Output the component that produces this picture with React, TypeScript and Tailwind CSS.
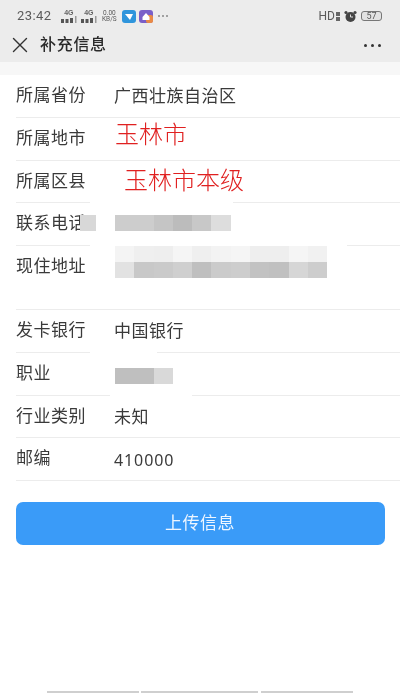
import { X } from "lucide-react";

const phoneBlocks = ["bg-[#cdcdcd]", "bg-[#cdcdcd]", "bg-[#c5c5c5]", "bg-[#bcbcbc]", "bg-[#c8c8c8]", "bg-[#dddddd]"];
const addrTop = ["bg-[#f4f4f4]", "bg-[#efefef]", "bg-[#eeeeee]", "bg-[#f5f5f5]", "bg-[#efefef]", "bg-[#f3f3f3]", "bg-[#f5f5f5]", "bg-[#eeeeee]", "bg-[#eeeeee]", "bg-[#f5f5f5]", "bg-[#f1f1f1]"];
const addrBottom = ["bg-[#e2e2e2]", "bg-[#c8c8c8]", "bg-[#cacaca]", "bg-[#cfcfcf]", "bg-[#bfbfbf]", "bg-[#cbcbcb]", "bg-[#cdcdcd]", "bg-[#c2c2c2]", "bg-[#c0c0c0]", "bg-[#d6d6d6]", "bg-[#cdcdcd]"];
const jobBlocks = ["bg-[#bfbfbf]", "bg-[#bfbfbf]", "bg-[#d9d9d9]"];

function Mosaic({ blocks }: { blocks: string[] }) {
  return (
    <div className="flex h-[16px]">
      {blocks.map((c, i) => (
        <div key={i} className={`w-[19.3px] ${c}`} />
      ))}
    </div>
  );
}

function Signal() {
  return (
    <div className="flex flex-col items-center w-[17px]">
      <span className="text-[7px] leading-[7px] text-[#666] font-bold">4G</span>
      <svg width="17" height="7" viewBox="0 0 17 7">
        <rect x="1" y="3" width="3" height="4" fill="#555" />
        <rect x="5.5" y="3" width="3" height="4" fill="#555" />
        <rect x="10" y="2" width="3" height="5" fill="#555" />
        <rect x="15" y="0" width="1.5" height="7" fill="#999" />
      </svg>
    </div>
  );
}

function StatusBar() {
  return (
    <div className="flex items-center h-[30px] pt-[2px] pl-[17px] pr-[18px] text-[#5a5a5a]">
      <span className="text-[13px] tracking-[0.4px] font-['Roboto',sans-serif]">23:42</span>
      <div className="flex items-center ml-[9px] gap-[3px]">
        <Signal />
        <Signal />
      </div>
      <div className="flex flex-col items-center ml-[4px] font-['Roboto',sans-serif] text-[6.5px] leading-[6.5px] w-[16px]">
        <span>0.00</span>
        <span>KB/S</span>
      </div>
      <svg className="ml-[5px]" width="14" height="13" viewBox="0 0 14 13">
        <rect width="14" height="13" rx="3" fill="#2f95dc" />
        <path d="M3 4 L11 4 L8 10 Z" fill="#fff" />
      </svg>
      <svg className="ml-[3px]" width="14" height="13" viewBox="0 0 14 13">
        <rect width="14" height="13" rx="3" fill="#7a5fc8" />
        <rect x="7" y="5" width="7" height="8" rx="2" fill="#ea8a45" />
        <path d="M3.5 7 L7 3 L10.5 7 L10.5 10 L3.5 10 Z" fill="#fff" />
      </svg>
      <div className="flex gap-[2px] ml-[5px]">
        <div className="w-[2px] h-[2px] rounded-full bg-[#888]" />
        <div className="w-[2px] h-[2px] rounded-full bg-[#888]" />
        <div className="w-[2px] h-[2px] rounded-full bg-[#888]" />
      </div>
      <div className="flex items-center ml-auto">
        <span className="text-[12px] font-['Roboto',sans-serif]">HD</span>
        <div className="flex flex-col gap-[1px] ml-[1px]">
          <div className="w-[4px] h-[4px] bg-[#666]" />
          <div className="w-[4px] h-[4px] bg-[#666]" />
        </div>
        <svg className="ml-[4px]" width="13" height="13" viewBox="0 0 13 13">
          <circle cx="6.5" cy="7" r="5" fill="#444" />
          <circle cx="2" cy="2.5" r="1.6" fill="#444" />
          <circle cx="11" cy="2.5" r="1.6" fill="#444" />
          <path d="M6.5 4.5 V7 H9" stroke="#ddd" strokeWidth="1" fill="none" />
        </svg>
        <div className="ml-[4px] flex items-center justify-center w-[21px] h-[10px] rounded-[3px] border border-[#777] bg-[#e2e2e2] text-[9px] leading-none font-['Roboto',sans-serif]">
          57
        </div>
      </div>
    </div>
  );
}

function Row({ label, h, top, gap, children }: { label: string; h: string; top?: boolean; gap?: string; children?: React.ReactNode }) {
  return (
    <div className={`relative flex ml-4 border-b border-[#ececec] ${h} ${top ? "items-start pt-[10px]" : "items-center"}`}>
      <div className="w-[98px] shrink-0 text-[17px] tracking-[0.5px] leading-[22px] text-[#3a3a3a]">{label}</div>
      {children}
      {gap && <div className={`absolute -bottom-px h-px bg-white ${gap}`} />}
    </div>
  );
}

function Value({ children }: { children: React.ReactNode }) {
  return <div className="mt-[2px] text-[17px] tracking-[0.5px] leading-[22px] text-[#3a3a3a]">{children}</div>;
}

function RedNote({ children, className }: { children: React.ReactNode; className: string }) {
  return <div className={`text-[24px] leading-[28px] font-light text-[#e02020] ${className}`}>{children}</div>;
}

export default function App() {
  return (
    <div className="w-[400px] h-[693px] overflow-hidden flex flex-col bg-white font-['Liberation_Sans','Noto_Sans_CJK_SC',sans-serif] blur-[0.3px]">
      <div className="bg-[#ececec]">
        <StatusBar />
        <div className="flex items-center h-[32px] pb-[2px] pl-[7px] pr-[19px]">
          <X size={26} strokeWidth={1.3} className="text-[#333]" />
          <span className="ml-[7px] text-[16px] tracking-[0.7px] font-medium text-[#2a2a2a]">补充信息</span>
          <div className="flex gap-[4px] ml-auto">
            <div className="w-[3px] h-[3px] rounded-full bg-[#333]" />
            <div className="w-[3px] h-[3px] rounded-full bg-[#333]" />
            <div className="w-[3px] h-[3px] rounded-full bg-[#333]" />
          </div>
        </div>
      </div>
      <div className="h-[13px] bg-[#f7f7f7]" />

      <Row label="所属省份" h="h-[43px]">
        <Value>广西壮族自治区</Value>
      </Row>
      <Row label="所属地市" h="h-[43px]">
        <RedNote className="-mt-[9px] ml-[1px]">玉林市</RedNote>
      </Row>
      <Row label="所属区县" h="h-[42px]" gap="left-[74px] w-[143px]">
        <RedNote className="-mt-[2px] ml-[10px]">玉林市本级</RedNote>
      </Row>
      <Row label="联系电话" h="h-[43px]" gap="left-[74px] w-[257px]">
        <div className="-mt-[2px] -ml-[34px] w-[16px] h-[16px] bg-[#d8d8d8] shrink-0" />
        <div className="-mt-[2px] ml-[19px]">
          <Mosaic blocks={phoneBlocks} />
        </div>
      </Row>
      <Row label="现住地址" h="h-[64px]" top>
        <div className="-mt-[10px] ml-[1px] flex flex-col">
          <Mosaic blocks={addrTop} />
          <Mosaic blocks={addrBottom} />
        </div>
      </Row>
      <Row label="发卡银行" h="h-[43px]" gap="left-[74px] w-[67px]">
        <Value>中国银行</Value>
      </Row>
      <Row label="职业" h="h-[43px]" gap="left-[94px] w-[82px]">
        <div className="mt-[4px] ml-[1px]">
          <Mosaic blocks={jobBlocks} />
        </div>
      </Row>
      <Row label="行业类别" h="h-[42px]">
        <Value>未知</Value>
      </Row>
      <Row label="邮编" h="h-[43px]">
        <div className="mt-[2px] text-[16px] tracking-[0.9px] leading-[22px] text-[#3a3a3a] font-['Noto_Sans',sans-serif]">410000</div>
      </Row>

      <button className="mx-[15.5px] mt-[21px] h-[43px] shrink-0 rounded-[7px] bg-[#3a9bf8] text-[17px] tracking-[0.5px] text-[#eef6ff]">
        上传信息
      </button>

      <div className="mt-auto flex h-[2px] pl-[47px] gap-[2px]">
        <div className="w-[92px] bg-[#cfcfcf]" />
        <div className="w-[117px] bg-[#cfcfcf]" />
        <div className="w-[92px] ml-[1px] bg-[#cfcfcf]" />
      </div>
    </div>
  );
}
